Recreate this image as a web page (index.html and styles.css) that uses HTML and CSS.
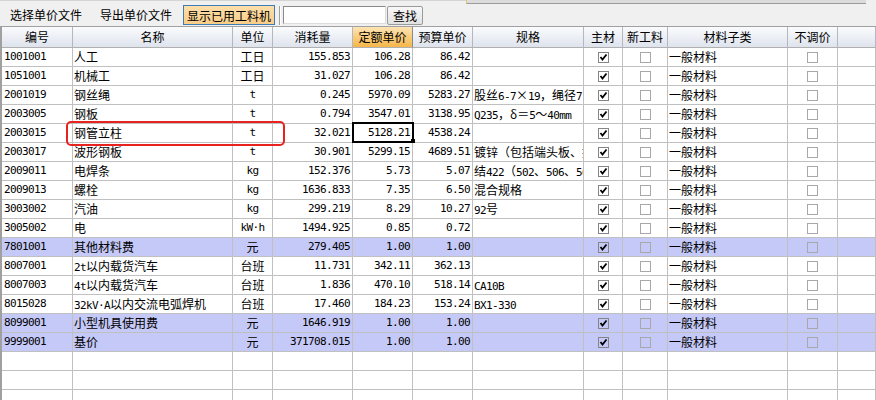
FILE: index.html
```html
<!DOCTYPE html>
<html lang="zh-CN">
<head>
<meta charset="utf-8">
<title>工料机</title>
<link rel="stylesheet" href="styles.css">
</head>
<body>
<div class="strip"><div class="strip-l"></div><div class="strip-r"></div></div>
<div class="toolbar">
  <span class="tbtn">选择单价文件</span>
  <span class="tbtn tbtn2">导出单价文件</span>
  <span class="tbtn tbtn-on">显示已用工料机</span>
  <span class="sep"></span>
  <span class="search"></span>
  <span class="find">查找</span>
</div>
<div class="grid">
  <div class="row head">
    <div class="c">编号</div><div class="c">名称</div><div class="c">单位</div><div class="c">消耗量</div><div class="c sorted">定额单价</div><div class="c">预算单价</div><div class="c">规格</div><div class="c">主材</div><div class="c">新工料</div><div class="c">材料子类</div><div class="c">不调价</div><div class="c"></div>
  </div>

  <div class="row"><div class="c m">1001001</div><div class="c t">人工</div><div class="c u">工日</div><div class="c n">155.853</div><div class="c n">106.28</div><div class="c n">86.42</div><div class="c t"></div><div class="c k"><span class="cb on"><svg viewBox="0 0 9 9"><polyline points="1.5,4 3.5,6.5 7.5,1.5"/></svg></span></div><div class="c k"><span class="cb"></span></div><div class="c t">一般材料</div><div class="c k"><span class="cb"></span></div><div class="c"></div></div>

  <div class="row"><div class="c m">1051001</div><div class="c t">机械工</div><div class="c u">工日</div><div class="c n">31.027</div><div class="c n">106.28</div><div class="c n">86.42</div><div class="c t"></div><div class="c k"><span class="cb on"><svg viewBox="0 0 9 9"><polyline points="1.5,4 3.5,6.5 7.5,1.5"/></svg></span></div><div class="c k"><span class="cb"></span></div><div class="c t">一般材料</div><div class="c k"><span class="cb"></span></div><div class="c"></div></div>

  <div class="row"><div class="c m">2001019</div><div class="c t">钢丝绳</div><div class="c u m">t</div><div class="c n">0.245</div><div class="c n">5970.09</div><div class="c n">5283.27</div><div class="c t">股丝<span class="a">6-7</span>×<span class="a">19</span>，绳径<span class="a">7.7~9.0mm</span></div><div class="c k"><span class="cb on"><svg viewBox="0 0 9 9"><polyline points="1.5,4 3.5,6.5 7.5,1.5"/></svg></span></div><div class="c k"><span class="cb"></span></div><div class="c t">一般材料</div><div class="c k"><span class="cb"></span></div><div class="c"></div></div>

  <div class="row"><div class="c m">2003005</div><div class="c t">钢板</div><div class="c u m">t</div><div class="c n">0.794</div><div class="c n">3547.01</div><div class="c n">3138.95</div><div class="c t"><span class="a">Q235</span>，δ＝<span class="a">5</span>～<span class="a">40mm</span></div><div class="c k"><span class="cb on"><svg viewBox="0 0 9 9"><polyline points="1.5,4 3.5,6.5 7.5,1.5"/></svg></span></div><div class="c k"><span class="cb"></span></div><div class="c t">一般材料</div><div class="c k"><span class="cb"></span></div><div class="c"></div></div>

  <div class="row"><div class="c m">2003015</div><div class="c t">钢管立柱</div><div class="c u m">t</div><div class="c n">32.021</div><div class="c n cur">5128.21<span class="cursor"><span class="handle"></span></span></div><div class="c n">4538.24</div><div class="c t"></div><div class="c k"><span class="cb on"><svg viewBox="0 0 9 9"><polyline points="1.5,4 3.5,6.5 7.5,1.5"/></svg></span></div><div class="c k"><span class="cb"></span></div><div class="c t">一般材料</div><div class="c k"><span class="cb"></span></div><div class="c"></div></div>

  <div class="row"><div class="c m">2003017</div><div class="c t">波形钢板</div><div class="c u m">t</div><div class="c n">30.901</div><div class="c n">5299.15</div><div class="c n">4689.51</div><div class="c t">镀锌（包括端头板、撑架）</div><div class="c k"><span class="cb on"><svg viewBox="0 0 9 9"><polyline points="1.5,4 3.5,6.5 7.5,1.5"/></svg></span></div><div class="c k"><span class="cb"></span></div><div class="c t">一般材料</div><div class="c k"><span class="cb"></span></div><div class="c"></div></div>

  <div class="row"><div class="c m">2009011</div><div class="c t">电焊条</div><div class="c u m">kg</div><div class="c n">152.376</div><div class="c n">5.73</div><div class="c n">5.07</div><div class="c t">结<span class="a">422</span>（<span class="a">502</span>、<span class="a">506</span>、<span class="a">507</span>）</div><div class="c k"><span class="cb on"><svg viewBox="0 0 9 9"><polyline points="1.5,4 3.5,6.5 7.5,1.5"/></svg></span></div><div class="c k"><span class="cb"></span></div><div class="c t">一般材料</div><div class="c k"><span class="cb"></span></div><div class="c"></div></div>

  <div class="row"><div class="c m">2009013</div><div class="c t">螺栓</div><div class="c u m">kg</div><div class="c n">1636.833</div><div class="c n">7.35</div><div class="c n">6.50</div><div class="c t">混合规格</div><div class="c k"><span class="cb on"><svg viewBox="0 0 9 9"><polyline points="1.5,4 3.5,6.5 7.5,1.5"/></svg></span></div><div class="c k"><span class="cb"></span></div><div class="c t">一般材料</div><div class="c k"><span class="cb"></span></div><div class="c"></div></div>

  <div class="row"><div class="c m">3003002</div><div class="c t">汽油</div><div class="c u m">kg</div><div class="c n">299.219</div><div class="c n">8.29</div><div class="c n">10.27</div><div class="c t"><span class="a">92</span>号</div><div class="c k"><span class="cb on"><svg viewBox="0 0 9 9"><polyline points="1.5,4 3.5,6.5 7.5,1.5"/></svg></span></div><div class="c k"><span class="cb"></span></div><div class="c t">一般材料</div><div class="c k"><span class="cb"></span></div><div class="c"></div></div>

  <div class="row"><div class="c m">3005002</div><div class="c t">电</div><div class="c u m">kW·h</div><div class="c n">1494.925</div><div class="c n">0.85</div><div class="c n">0.72</div><div class="c t"></div><div class="c k"><span class="cb on"><svg viewBox="0 0 9 9"><polyline points="1.5,4 3.5,6.5 7.5,1.5"/></svg></span></div><div class="c k"><span class="cb"></span></div><div class="c t">一般材料</div><div class="c k"><span class="cb"></span></div><div class="c"></div></div>

  <div class="row hl"><div class="c m">7801001</div><div class="c t">其他材料费</div><div class="c u">元</div><div class="c n">279.405</div><div class="c n">1.00</div><div class="c n">1.00</div><div class="c t"></div><div class="c k"><span class="cb on"><svg viewBox="0 0 9 9"><polyline points="1.5,4 3.5,6.5 7.5,1.5"/></svg></span></div><div class="c k"><span class="cb"></span></div><div class="c t">一般材料</div><div class="c k"><span class="cb"></span></div><div class="c"></div></div>

  <div class="row"><div class="c m">8007001</div><div class="c t"><span class="a">2t</span>以内载货汽车</div><div class="c u">台班</div><div class="c n">11.731</div><div class="c n">342.11</div><div class="c n">362.13</div><div class="c t"></div><div class="c k"><span class="cb on"><svg viewBox="0 0 9 9"><polyline points="1.5,4 3.5,6.5 7.5,1.5"/></svg></span></div><div class="c k"><span class="cb"></span></div><div class="c t">一般材料</div><div class="c k"><span class="cb"></span></div><div class="c"></div></div>

  <div class="row"><div class="c m">8007003</div><div class="c t"><span class="a">4t</span>以内载货汽车</div><div class="c u">台班</div><div class="c n">1.836</div><div class="c n">470.10</div><div class="c n">518.14</div><div class="c t"><span class="a">CA10B</span></div><div class="c k"><span class="cb on"><svg viewBox="0 0 9 9"><polyline points="1.5,4 3.5,6.5 7.5,1.5"/></svg></span></div><div class="c k"><span class="cb"></span></div><div class="c t">一般材料</div><div class="c k"><span class="cb"></span></div><div class="c"></div></div>

  <div class="row"><div class="c m">8015028</div><div class="c t"><span class="a">32kV·A</span>以内交流电弧焊机</div><div class="c u">台班</div><div class="c n">17.460</div><div class="c n">184.23</div><div class="c n">153.24</div><div class="c t"><span class="a">BX1-330</span></div><div class="c k"><span class="cb on"><svg viewBox="0 0 9 9"><polyline points="1.5,4 3.5,6.5 7.5,1.5"/></svg></span></div><div class="c k"><span class="cb"></span></div><div class="c t">一般材料</div><div class="c k"><span class="cb"></span></div><div class="c"></div></div>

  <div class="row hl"><div class="c m">8099001</div><div class="c t">小型机具使用费</div><div class="c u">元</div><div class="c n">1646.919</div><div class="c n">1.00</div><div class="c n">1.00</div><div class="c t"></div><div class="c k"><span class="cb on"><svg viewBox="0 0 9 9"><polyline points="1.5,4 3.5,6.5 7.5,1.5"/></svg></span></div><div class="c k"><span class="cb"></span></div><div class="c t">一般材料</div><div class="c k"><span class="cb"></span></div><div class="c"></div></div>

  <div class="row hl"><div class="c m">9999001</div><div class="c t">基价</div><div class="c u">元</div><div class="c n">371708.015</div><div class="c n">1.00</div><div class="c n">1.00</div><div class="c t"></div><div class="c k"><span class="cb on"><svg viewBox="0 0 9 9"><polyline points="1.5,4 3.5,6.5 7.5,1.5"/></svg></span></div><div class="c k"><span class="cb"></span></div><div class="c t">一般材料</div><div class="c k"><span class="cb"></span></div><div class="c"></div></div>

  <div class="row"><div class="c"></div><div class="c"></div><div class="c"></div><div class="c"></div><div class="c"></div><div class="c"></div><div class="c"></div><div class="c"></div><div class="c"></div><div class="c"></div><div class="c"></div><div class="c"></div></div>
  <div class="row"><div class="c"></div><div class="c"></div><div class="c"></div><div class="c"></div><div class="c"></div><div class="c"></div><div class="c"></div><div class="c"></div><div class="c"></div><div class="c"></div><div class="c"></div><div class="c"></div></div>
  <div class="row"><div class="c"></div><div class="c"></div><div class="c"></div><div class="c"></div><div class="c"></div><div class="c"></div><div class="c"></div><div class="c"></div><div class="c"></div><div class="c"></div><div class="c"></div><div class="c"></div></div>

  <div class="mark"></div>
</div>
</body>
</html>
```

FILE: styles.css
```css
* { box-sizing: border-box; }

html, body {
  margin: 0;
  width: 876px;
  height: 400px;
  overflow: hidden;
}

body {
  background: #f0f0f0;
  font-family: "Noto Sans CJK SC", sans-serif;
  font-size: 12px;
  color: #000;
}

.strip {
  display: flex;
  height: 4px;
}
.strip-l {
  width: 466px;
  border-top: 1px solid #d4d4d4;
}
.strip-r {
  flex: 1;
  margin-right: 10px;
  background: #dcdcdc;
  border-bottom: 1px solid #9c9c9c;
  border-left: 1px solid #e8c860;
}

.toolbar {
  display: flex;
  align-items: center;
  height: 22px;
  padding-left: 4px;
}

.tbtn {
  height: 20px;
  line-height: 19px;
  padding: 0 6px;
  white-space: nowrap;
}
.tbtn2 { margin-left: 6px; }
.tbtn-on {
  margin-left: 5px;
  width: 92px;
  text-align: center;
  padding: 0;
  border: 1px solid #3c7db8;
  background: linear-gradient(#fddfab, #f9cd88);
}

.sep {
  margin-left: 4px;
  width: 2px;
  height: 19px;
  border-left: 1px solid #a0a0a0;
  border-right: 1px solid #ffffff;
}

.search {
  margin-left: 2px;
  width: 103px;
  height: 18px;
  background: #fff;
  border: 1px solid;
  border-color: #8a8a8a #dcdcdc #dcdcdc #8a8a8a;
}

.find {
  margin-left: 1px;
  width: 36px;
  height: 19px;
  line-height: 17px;
  text-align: center;
  border: 1px solid #9a9a9a;
  border-radius: 2px;
  background: linear-gradient(#f8f8f8, #e2e2e2);
}

.grid {
  position: relative;
  height: 374px;
  background: #fff;
  border-top: 1px solid #a0a0a0;
  border-left: 2px solid #a0a0a0;
  overflow: hidden;
}

.row {
  display: grid;
  grid-template-columns: 71px 160px 40px 80px 60px 60px 111px 39px 45px 120px 50px 1fr;
  height: 19px;
}

.c {
  border-right: 1px solid #c0c0c0;
  border-bottom: 1px solid #c0c0c0;
  line-height: 18px;
  white-space: nowrap;
  overflow: hidden;
}

.head {
  height: 21px;
  background: linear-gradient(#fafbfd, #dde2ec);
}
.head .c {
  line-height: 20px;
  text-align: center;
  border-right-color: #b4b7c0;
  border-bottom-color: #b0b0b0;
}
.head .sorted {
  background: linear-gradient(#fde4b4, #f6b649);
  border-right-color: #8a8a8a;
}

.hl { background: #c5c9f8; }

.m {
  font-family: "DejaVu Sans Mono", "Noto Sans CJK SC", monospace;
  font-size: 11px;
  letter-spacing: -0.62px;
  padding-left: 2px;
}

.t { padding-left: 1px; }

.a {
  font-family: "DejaVu Sans Mono", monospace;
  font-size: 11px;
  letter-spacing: -0.62px;
}

.u {
  text-align: center;
  padding-left: 0;
}

.n {
  text-align: right;
  padding-right: 2px;
  font-family: "DejaVu Sans Mono", monospace;
  font-size: 11px;
  letter-spacing: -0.62px;
}

.k {
  display: flex;
  align-items: center;
  justify-content: center;
}

.cb {
  display: block;
  width: 11px;
  height: 11px;
  border: 1px solid #a8a8a8;
}
.cb.on { border-color: #858585; }
.cb svg {
  display: block;
  width: 9px;
  height: 9px;
}
.cb polyline {
  fill: none;
  stroke: #000;
  stroke-width: 1.8;
}

.cur {
  position: relative;
  overflow: visible;
}
.cursor {
  position: absolute;
  top: -2px;
  left: -1px;
  right: -2px;
  bottom: -1px;
  border: 2px solid #000;
}
.handle {
  position: absolute;
  right: -3px;
  bottom: -2px;
  width: 4px;
  height: 4px;
  background: #000;
}

.mark {
  position: absolute;
  left: 64px;
  top: 94px;
  width: 219px;
  height: 25px;
  border: 2px solid #e8231f;
  border-radius: 5px;
}
```
